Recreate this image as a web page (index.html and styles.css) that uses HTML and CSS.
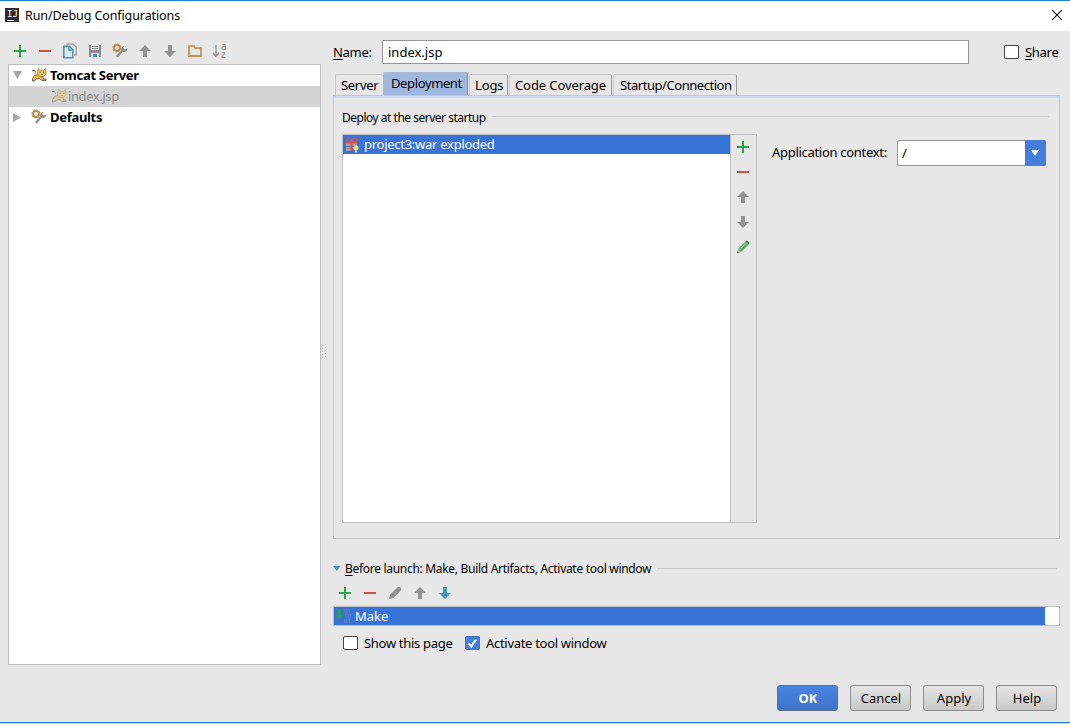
FILE: index.html
```html
<!DOCTYPE html>
<html lang="en">
<head>
    <meta charset="UTF-8">
    <meta name="viewport" content="width=device-width, initial-scale=1.0">
    <title>Run/Debug Configurations</title>
    <link rel="stylesheet" href="styles.css">
</head>
<body>
    <!-- Shared icons -->
    <svg class="sprite" xmlns="http://www.w3.org/2000/svg">
        <symbol id="add" viewBox="0 0 16 16"><path d="M7 2h2v5h5v2H9v5H7V9H2V7h5z" fill="#2fa04c"/></symbol>
        <symbol id="remove" viewBox="0 0 16 16"><path d="M2 7h12v2H2z" fill="#c9544c"/></symbol>
        <symbol id="up" viewBox="0 0 16 16"><path d="M8 2l6 6h-4v6H6V8H2z"/></symbol>
        <symbol id="down" viewBox="0 0 16 16"><path d="M8 14l6-6h-4V2H6v6H2z"/></symbol>
        <symbol id="gear" viewBox="0 0 16 16">
            <path d="M15.5 5.200a3.600 3.600 0 0 1-4.800 3.600L5.800 14.800 4 13l5.200-5.600A3.600 3.600 0 0 1 12.500 2.800l-1.300 2.300 1.600 1.500z" fill="#8d8d8d"/>
            <circle cx="5" cy="5" r="2.900" fill="none" stroke="#c08b4b" stroke-width="2"/>
            <circle cx="5" cy="5" r="4.200" fill="none" stroke="#c08b4b" stroke-width="1" stroke-dasharray="1.600 1.700"/>
        </symbol>
        <symbol id="tomcat" viewBox="0 0 16 16">
            <path d="M1 3.500h2.500l1 2" fill="none" stroke="#4b4435"/>
            <path d="M7.200 7.500L3.500 8.500 1.500 11.500v2.500h2l1.500-2 3.500-.5 2.500 2h4v-1.500h-2.500L11.500 9z" fill="#eebd4e" stroke="#4b4435" stroke-width=".8"/>
            <path d="M7 1.500L9 3.200h3.500l2-1.700.5 5.500-2.500 2.500H9L6.500 7z" fill="#f3c95f" stroke="#8a6a2c" stroke-width=".7"/>
            <path d="M8.500 5.200h1.300M12 5.200h1.300M10.500 7.500h1" stroke="#3b321f"/>
        </symbol>
    </svg>

    <div class="window">
        <!-- Title bar -->
        <div class="titlebar">
            <svg class="app-icon" width="14" height="14" viewBox="0 0 14 14">
                <path d="M0 0h14v14H0z" fill="#2d2b2e"/>
                <text x="2" y="9">IJ</text>
                <path d="M2 12h7v1H2z" fill="#fff"/>
            </svg>
            <span class="title">Run/Debug Configurations</span>
            <svg class="close" width="10" height="10" viewBox="0 0 10 10"><path d="M0 0l10 10M10 0L0 10" stroke="#111" stroke-width="1.1"/></svg>
        </div>

        <div class="main">
            <!-- Configurations list -->
            <div class="sidebar">
                <div class="toolbar">
                    <svg class="icon"><use href="#add"/></svg>
                    <svg class="icon"><use href="#remove"/></svg>
                    <svg class="icon" viewBox="0 0 16 16">
                        <path d="M5 2.500V1h6l3.300 3.300V12H12" fill="#e3e7e9" stroke="#a3a3a3" stroke-width="1.4"/>
                        <path d="M1.800 3.200h5.500l3.500 3.500v8h-9z" fill="#dceaf2" stroke="#5593b8" stroke-width="1.6"/>
                        <path d="M7 3v4h4" fill="none" stroke="#5593b8" stroke-width="1.3"/>
                    </svg>
                    <svg class="icon" viewBox="0 0 16 16">
                        <path d="M2 2h12v12H2z" fill="#8b8b8b"/>
                        <path d="M4 2h8v5H4z" fill="#e9e9e9"/>
                        <path d="M5 3.500h6M5 5.500h6" stroke="#8b8b8b"/>
                        <path d="M4 10h8v4H4z" fill="#e1e1e1"/>
                        <path d="M6 11h4v3H6z" fill="#468eaf"/>
                    </svg>
                    <svg class="icon"><use href="#gear"/></svg>
                    <svg class="icon gray"><use href="#up"/></svg>
                    <svg class="icon gray"><use href="#down"/></svg>
                    <svg class="icon" viewBox="0 0 16 16"><path d="M2 13V3.200h5l1.300 2H14V13z" fill="none" stroke="#c29457" stroke-width="1.8"/></svg>
                    <svg class="icon sort" viewBox="0 0 16 16">
                        <path d="M4 2v11M1 10l3 3.300L7 10" fill="none" stroke="#929292" stroke-width="1.3"/>
                        <text x="9" y="6.500">a</text>
                        <text x="9" y="14.500">z</text>
                    </svg>
                </div>
                <div class="tree">
                    <div class="tree-row">
                        <svg class="arrow" viewBox="0 0 10 10"><path d="M1 1h9L5.500 9z"/></svg>
                        <svg class="icon"><use href="#tomcat"/></svg>
                        <b>Tomcat Server</b>
                    </div>
                    <div class="tree-row child selected">
                        <svg class="icon"><use href="#tomcat"/></svg>
                        <span>index.jsp</span>
                    </div>
                    <div class="tree-row">
                        <svg class="arrow" viewBox="0 0 10 10"><path d="M1 1l8 4.500L1 10z"/></svg>
                        <svg class="icon"><use href="#gear"/></svg>
                        <b>Defaults</b>
                    </div>
                </div>
            </div>

            <div class="splitter">
                <svg width="5" height="16" viewBox="0 0 5 16">
                    <path d="M1.500 2v14M3.500 1v14" stroke="#fff" stroke-dasharray="1 2"/>
                    <path d="M.5 1v14M3.500 0v14" stroke="#aaa" stroke-dasharray="1 2"/>
                </svg>
            </div>

            <!-- Configuration editor -->
            <div class="editor">
                <div class="name-row">
                    <label class="name-label"><u>N</u>ame:</label>
                    <div class="name-input">index.jsp</div>
                    <span class="checkbox"></span>
                    <label class="share"><u>S</u>hare</label>
                </div>

                <div class="tabs">
                    <div class="tab server">Server</div>
                    <div class="tab deployment active">Deployment</div>
                    <div class="tab logs">Logs</div>
                    <div class="tab coverage">Code Coverage</div>
                    <div class="tab startup">Startup/Connection</div>
                </div>

                <div class="panel">
                    <div class="group-title"><span>Deploy at the server startup</span><hr></div>
                    <div class="deploy">
                        <div class="artifacts">
                            <div class="artifact-list">
                                <div class="artifact">
                                    <svg class="icon" viewBox="0 0 16 16">
                                        <path d="M2 6h5v8H2zM8 6h5v5H8z" fill="#a69da8"/>
                                        <path d="M1 5h13v1.500H1zM6.500 5h2v9h-2z" fill="#d9534d"/>
                                        <path d="M7.500 5C5 5 2 4 3 2s4 0 4.500 3C8 2 11 0 12.500 2S10 5 7.500 5" fill="none" stroke="#d9534d" stroke-width="1.2"/>
                                        <path d="M2 9.500h4.500M8.500 9.500h2" stroke="#71697d"/>
                                        <circle cx="12" cy="11" r="2.600" fill="#f3d77c"/>
                                        <path d="M11 13.500h2v2h-2z" fill="#ddd"/>
                                    </svg>
                                    <span>project3:war exploded</span>
                                </div>
                            </div>
                            <div class="side-tools">
                                <svg class="icon"><use href="#add"/></svg>
                                <svg class="icon"><use href="#remove"/></svg>
                                <svg class="icon gray"><use href="#up"/></svg>
                                <svg class="icon gray"><use href="#down"/></svg>
                                <svg class="icon" viewBox="0 0 16 16">
                                    <path d="M2 14l1-4 3 3z" fill="#e5c69a"/>
                                    <path d="M2 14l.5-2 1.500 1.500z" fill="#222"/>
                                    <path d="M3 10l7.500-7.500 3 3L6 13z" fill="#43a85a"/>
                                    <path d="M4.500 10.500L11.500 4" stroke="#8ed69a" stroke-width="1.300"/>
                                    <path d="M10.500 2.500l1-.8q2.800.3 2.700 2.900l-.7.9z" fill="#337b43"/>
                                </svg>
                            </div>
                        </div>
                        <label class="context-label">Application context:</label>
                        <div class="combo">
                            <span>/</span>
                            <div class="combo-button"><svg width="8" height="6" viewBox="0 0 8 6"><path d="M0 0h8L4 6z" fill="#fff"/></svg></div>
                        </div>
                    </div>
                </div>

                <!-- Before launch -->
                <div class="before-title">
                    <svg width="8" height="5" viewBox="0 0 8 5"><path d="M0 0h7.500L3.800 5z" fill="#4795b9"/></svg>
                    <span><u>B</u>efore launch: Make, Build Artifacts, Activate tool window</span>
                    <hr>
                </div>
                <div class="toolbar before-tools">
                    <svg class="icon"><use href="#add"/></svg>
                    <svg class="icon"><use href="#remove"/></svg>
                    <svg class="icon gray" viewBox="0 0 16 16"><path d="M2 14l1-4.500L10.500 2.500Q12 1.200 13.500 2.500t.2 3L6.500 13z"/></svg>
                    <svg class="icon gray"><use href="#up"/></svg>
                    <svg class="icon blue"><use href="#down"/></svg>
                </div>
                <div class="task-list">
                    <div class="task">
                        <svg class="icon make-icon" viewBox="0 0 16 16">
                            <path d="M3 1h3v6h2.200L4.500 12 1 7h2z" fill="#2f9f4d"/>
                            <text x="8.800" y="5">01</text>
                            <text x="8.800" y="10">10</text>
                            <text x="8.800" y="15">01</text>
                        </svg>
                        <span>Make</span>
                    </div>
                </div>
                <div class="options">
                    <span class="checkbox"></span>
                    <label class="show-page">Show this page</label>
                    <span class="checkbox checked"><svg width="11" height="11" viewBox="0 0 11 11"><path d="M1.500 5.500l2.800 3L9 1.500" fill="none" stroke="#fff" stroke-width="2.200"/></svg></span>
                    <label>Activate tool window</label>
                </div>
            </div>
        </div>

        <!-- Dialog buttons -->
        <div class="buttons">
            <button class="btn primary">OK</button>
            <button class="btn">Cancel</button>
            <button class="btn">Apply</button>
            <button class="btn">Help</button>
        </div>
    </div>
</body>
</html>
```
FILE: styles.css
```css
* {
    box-sizing: border-box;
}

body {
    margin: 0;
    height: 724px;
    overflow: hidden;
    background-color: #d5d9dc;
    font-family: "Noto Sans", "Open Sans", sans-serif;
    font-size: 13px;
    line-height: 18px;
    letter-spacing: -0.3px;
    color: #000;
    white-space: nowrap;
}

u {
    text-underline-offset: 2px;
}

.sprite {
    display: none;
}

.window {
    height: 723px;
    border-top: 1px solid #1a82d2;
    border-bottom: 1px solid #1a82d2;
    background-color: #e7e7e7;
}

/* Title bar */
.titlebar {
    height: 30px;
    padding: 0 8px 0 5px;
    display: flex;
    align-items: center;
    background-color: #fff;
}

.app-icon {
    margin-bottom: 2px;
}

.app-icon text {
    font-family: "DejaVu Sans Mono", monospace;
    font-size: 9px;
    letter-spacing: 0;
    fill: #fff;
}

.title {
    margin-left: 6px;
    flex: 1;
    font-size: 12.5px;
    letter-spacing: -0.1px;
}

.close {
    margin-bottom: 2px;
}

.main {
    display: flex;
    height: 634px;
    padding: 9px 10px 0 8px;
}

/* Icons */
.icon {
    width: 16px;
    height: 16px;
    flex: none;
}

.gray {
    fill: #929292;
}

.blue {
    fill: #4297bc;
}

.sort {
    overflow: visible;
}

.sort text {
    font-size: 10px;
    fill: #929292;
}

/* Left side */
.sidebar {
    width: 313px;
    display: flex;
    flex-direction: column;
}

.toolbar {
    display: flex;
    gap: 9px;
    align-items: center;
    height: 24px;
    padding: 0 4px 2px;
}

.tree {
    height: 601px;
    border: 1px solid #bfbfbf;
    background-color: #fff;
}

.tree-row {
    display: flex;
    align-items: center;
    height: 21px;
    padding: 0 0 1px 3px;
}

.tree-row .arrow {
    width: 10px;
    height: 10px;
    margin-right: 9px;
    fill: #a6a6a6;
}

.tree-row b {
    margin-left: 3px;
}

.tree-row.child {
    padding-left: 42px;
    color: #8c8c8c;
}

.tree-row.child span {
    margin-left: 1px;
    letter-spacing: -0.4px;
}

.tree-row.child .icon {
    opacity: 0.45;
}

.selected {
    background-color: #d4d4d4;
}

.splitter {
    width: 12px;
    padding: 304px 0 0 1px;
}

/* Right side */
.editor {
    width: 727px;
}

.name-row {
    display: flex;
    align-items: center;
    height: 24px;
}

.name-label {
    width: 49px;
}

.name-input {
    width: 587px;
    height: 24px;
    margin-right: 35px;
    padding: 2px 5px;
    border: 1px solid #969696;
    background-color: #fff;
    letter-spacing: 0;
}

.checkbox {
    width: 15px;
    height: 14px;
    flex: none;
    border: 1px solid #444;
    border-radius: 2px;
    background-color: #fff;
}

.checkbox.checked {
    display: flex;
    align-items: center;
    justify-content: center;
    border-color: #3a73c9;
    background-color: #437edb;
}

.share {
    margin-left: 6px;
    letter-spacing: -0.3px;
}

/* Tabs */
.tabs {
    display: flex;
    align-items: flex-end;
    height: 31px;
    padding-left: 2px;
}

.tab {
    height: 21px;
    margin-right: 1px;
    padding: 1px 0 0 5px;
    border: 1px solid #c6c6c6;
    border-right: 1px solid #999;
    border-bottom: 0;
    border-radius: 2px 2px 0 0;
}

.server {
    width: 48px;
    border-right: 0;
}

.deployment {
    width: 85px;
    letter-spacing: -0.38px;
}

.logs {
    width: 39px;
    letter-spacing: -0.1px;
}

.coverage {
    width: 103px;
    letter-spacing: -0.1px;
}

.startup {
    width: 124px;
    padding-left: 6px;
    letter-spacing: -0.45px;
}

.tab.active {
    height: 23px;
    margin: 0 1px 0 -1px;
    padding: 1px 0 0 7px;
    border-color: #a9b9d4 #8e8e8e #a9b9d4 #a9b9d4;
    background-color: #a0b8e0;
}

.panel {
    height: 444px;
    padding: 10px 10px 0 8px;
    border: 1px solid #c6c6c6;
    box-shadow: inset 0 2px #c9dcf3;
}

.group-title {
    display: flex;
    align-items: center;
    height: 24px;
    font-size: 12px;
    letter-spacing: -0.49px;
}

hr {
    flex: 1;
    height: 1px;
    margin: 0 0 3px 6px;
    border: 0;
    background-color: #ccc;
}

.deploy {
    display: flex;
    margin-top: 4px;
}

.artifacts {
    display: flex;
    width: 415px;
    height: 389px;
    border: 1px solid #bfbfbf;
}

.artifact-list {
    flex: 1;
    border-right: 1px solid #bfbfbf;
    background-color: #fff;
}

.artifact {
    display: flex;
    align-items: center;
    height: 19px;
    padding-left: 1px;
    color: #fff;
    background-color: #3874d8;
}

.artifact span {
    margin: 0 0 1px 4px;
    letter-spacing: -0.27px;
}

.side-tools {
    width: 25px;
    padding: 4px 0 0 4px;
    display: flex;
    flex-direction: column;
    gap: 9px;
}

.context-label {
    width: 125px;
    margin: 9px 0 0 15px;
}

.combo {
    display: flex;
    align-items: center;
    justify-content: space-between;
    width: 149px;
    height: 26px;
    margin-top: 6px;
    padding-left: 4px;
    border: 1px solid #969696;
    border-right: 0;
    border-radius: 2px;
    background-color: #fff;
}

.combo-button {
    display: flex;
    align-items: center;
    justify-content: center;
    width: 21px;
    height: 26px;
    padding-right: 1px;
    border-radius: 0 2px 2px 0;
    background-color: #447ddb;
}

/* Before launch */
.before-title {
    display: flex;
    align-items: center;
    height: 20px;
    margin-top: 20px;
    padding-right: 3px;
    font-size: 12px;
}

.before-title svg {
    margin-bottom: 2px;
}

.before-title span {
    margin-left: 4px;
}

.before-title hr {
    margin-bottom: 1px;
}

.before-tools {
    height: 27px;
    padding: 0 4px;
}

.task-list {
    height: 20px;
    padding-right: 14px;
    border: 1px solid #bfbfbf;
    background-color: #fff;
}

.task {
    display: flex;
    align-items: center;
    height: 18px;
    padding-left: 1px;
    color: #fff;
    background-color: #3874d8;
    letter-spacing: 0;
}

.task span {
    margin-left: 4px;
}

.make-icon text {
    font-size: 6px;
    fill: #7d7f8b;
}

.options {
    display: flex;
    align-items: center;
    height: 34px;
    padding-left: 10px;
}

.options label {
    margin-left: 6px;
}

.options .show-page {
    width: 101px;
}

/* Dialog buttons */
.buttons {
    display: flex;
    justify-content: flex-end;
    gap: 12px;
    padding: 20px 13px 0 0;
}

.btn {
    width: 61px;
    height: 26px;
    padding: 0 0 1px 1px;
    border: 1px solid #8d8d8d;
    border-radius: 3px;
    background: linear-gradient(#e5e5e5, #c9c9c9);
    font: inherit;
    color: #000;
}

.btn.primary {
    border-color: #5f6f8a;
    background: linear-gradient(#4984e2, #3f74cc);
    font-weight: bold;
    color: #fff;
}
```
